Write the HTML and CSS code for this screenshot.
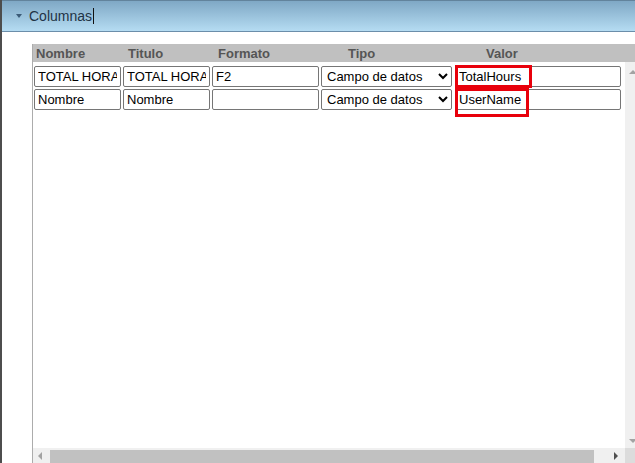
FILE: index.html
```html
<!DOCTYPE html>
<html>
<head>
  <meta charset="utf-8">
  <title>Columnas</title>
  <link rel="stylesheet" href="styles.css">
</head>
<body>
  <div class="panel">
    <div class="panel-head">
      <span class="toggle"></span>
      <span class="panel-title">Columnas</span><span class="caret"></span>
    </div>
    <div class="panel-body">
      <div class="grid">
        <div class="grid-head">
          <div class="col c-nombre">Nombre</div>
          <div class="col c-titulo">Titulo</div>
          <div class="col c-formato">Formato</div>
          <div class="col c-tipo">Tipo</div>
          <div class="col c-valor">Valor</div>
        </div>
        <div class="grid-main">
          <div class="grid-rows">
            <div class="grid-row">
              <input class="field" type="text" value="TOTAL HORAS">
              <input class="field" type="text" value="TOTAL HORAS">
              <input class="field" type="text" value="F2">
              <select class="field pick">
                <option>Campo de datos</option>
              </select>
              <div class="valor-cell">
                <input class="field" type="text" value="TotalHours">
                <span class="mark mark-1"></span>
              </div>
            </div>
            <div class="grid-row">
              <input class="field" type="text" value="Nombre">
              <input class="field" type="text" value="Nombre">
              <input class="field" type="text" value="">
              <select class="field pick">
                <option>Campo de datos</option>
              </select>
              <div class="valor-cell">
                <input class="field" type="text" value="UserName">
                <span class="mark mark-2"></span>
              </div>
            </div>
          </div>
          <div class="vscroll">
            <span class="arr arr-up"></span>
            <span class="arr arr-down"></span>
          </div>
        </div>
        <div class="hscroll">
          <span class="arr arr-left"></span>
          <span class="thumb"></span>
          <span class="arr arr-right"></span>
          <span class="corner"></span>
        </div>
      </div>
    </div>
  </div>
</body>
</html>
```

FILE: styles.css
```css
/* page */
html, body {
  margin: 0;
  height: 463px;
  overflow: hidden;
  background: #fff;
}

body {
  font-family: "Liberation Sans", Arial, sans-serif;
  font-size: 13px;
}

.panel {
  height: 463px;
  border-left: 2px solid #4d4d4d;
  display: flex;
  flex-direction: column;
}

/* header bar */
.panel-head {
  height: 30px;
  border-top: 1px solid #62839c;
  border-bottom: 1px solid #6b8eaa;
  background: linear-gradient(#7fa8c5, #b5dcf2);
  display: flex;
  align-items: center;
  padding-left: 14px;
  flex-shrink: 0;
}

.toggle {
  width: 0;
  height: 0;
  border-left: 3px solid transparent;
  border-right: 3px solid transparent;
  border-top: 4px solid #3b5b78;
  margin-right: 7px;
}

.panel-title {
  font-size: 14px;
  color: #1f3345;
}

.caret {
  width: 1px;
  height: 16px;
  background: #111;
  margin-left: 1px;
}

/* body */
.panel-body {
  flex: 1;
  padding: 12px 0 0 30px;
  display: flex;
  min-height: 0;
}

.grid {
  width: 609px;
  flex-shrink: 0;
  border-left: 1px solid #acacac;
  display: flex;
  flex-direction: column;
}

.grid-head {
  height: 18px;
  background: #c0c0c0;
  display: grid;
  grid-template-columns: 90px 89px 109px 134px 1fr;
  align-items: center;
  font-weight: bold;
  color: #555;
  flex-shrink: 0;
}

.c-nombre { padding-left: 3px; }
.c-titulo { padding-left: 5px; }
.c-formato { padding-left: 6px; }
.c-tipo { padding-left: 27px; }
.c-valor { padding-left: 31px; }

.grid-main {
  flex: 1;
  display: flex;
  min-height: 0;
}

.grid-rows {
  flex: 1;
  min-width: 0;
  padding: 4px 0 0 1px;
  display: flex;
  flex-direction: column;
  gap: 2px;
}

.grid-row {
  display: flex;
  gap: 2px;
  height: 21px;
}

.field {
  box-sizing: border-box;
  flex-shrink: 0;
  height: 21px;
  border: 1px solid #767676;
  border-radius: 2px;
  font-family: "Liberation Sans", Arial, sans-serif;
  font-size: 13px;
  color: #000;
  padding: 0 3px;
  margin: 0;
  background: #fff;
  outline: none;
}

.grid-row > .field:nth-child(1),
.grid-row > .field:nth-child(2) { width: 87px; }
.grid-row > .field:nth-child(3) { width: 107px; }

.pick {
  width: 131px;
  padding: 0 1px;
  margin-right: 1px;
}

.valor-cell {
  position: relative;
  flex-shrink: 0;
  width: 166px;
}

.valor-cell .field {
  width: 166px;
}

/* red annotation boxes */
.mark {
  position: absolute;
  border: 3px solid #e8000b;
  pointer-events: none;
}

.mark-1 {
  left: 0;
  top: -1px;
  width: 71px;
  height: 17px;
}

.mark-2 {
  left: 0;
  top: -1px;
  width: 68px;
  height: 23px;
}

/* scrollbars */
.vscroll {
  width: 17px;
  background: #f0f0f0;
  position: relative;
  flex-shrink: 0;
}

.hscroll {
  height: 15px;
  background: #f0f0f0;
  position: relative;
  flex-shrink: 0;
}

.thumb {
  position: absolute;
  left: 17px;
  right: 48px;
  top: 2px;
  bottom: 0;
  background: #c1c1c1;
}

.corner {
  position: absolute;
  right: 0;
  top: 0;
  width: 17px;
  height: 15px;
  background: #dcdcdc;
}

.arr {
  position: absolute;
  width: 0;
  height: 0;
}

.arr-up {
  left: 4px;
  top: 8px;
  border-left: 4px solid transparent;
  border-right: 4px solid transparent;
  border-bottom: 4px solid #a3a3a3;
}

.arr-down {
  left: 4px;
  bottom: 5px;
  border-left: 4px solid transparent;
  border-right: 4px solid transparent;
  border-top: 4px solid #a3a3a3;
}

.arr-left {
  left: 5px;
  top: 4px;
  border-top: 4px solid transparent;
  border-bottom: 4px solid transparent;
  border-right: 4px solid #a3a3a3;
}

.arr-right {
  right: 24px;
  top: 4px;
  border-top: 4px solid transparent;
  border-bottom: 4px solid transparent;
  border-left: 4px solid #505050;
}
```
